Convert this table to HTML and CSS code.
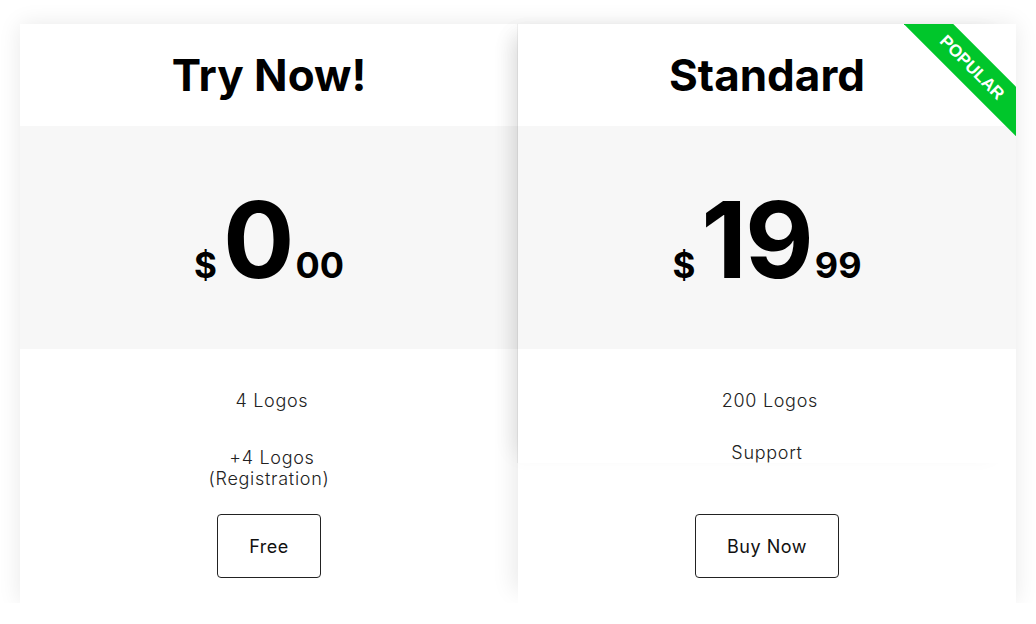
FILE: index.html
```html
<!DOCTYPE html>
<html>
<head>
<meta charset="utf-8">
<link rel="stylesheet" href="styles.css">
</head>
<body>
<div class="pricing">
  <div class="col col-left">
    <div class="card-top">
      <div class="card-head"><h2 class="title">Try Now!</h2></div>
      <div class="price"><span class="cur">$</span><span class="amount">0</span><span class="cents">00</span></div>
      <ul class="features">
        <li>&nbsp;4 Logos</li>
        <li class="extra">&nbsp;+4 Logos<br>(Registration)</li>
      </ul>
    </div>
    <div class="action"><a class="btn">Free</a></div>
  </div>
  <div class="col col-right">
    <div class="card-top card-top-right">
      <div class="card-head"><h2 class="title">Standard</h2></div>
      <div class="price"><span class="cur">$</span><span class="amount">19</span><span class="cents">99</span></div>
      <ul class="features">
        <li>&nbsp;200 Logos</li>
        <li>Support</li>
      </ul>
      <div class="ribbon"><div class="ribbon-band">POPULAR</div></div>
    </div>
    <div class="action"><a class="btn">Buy Now</a></div>
  </div>
</div>
</body>
</html>
```

FILE: styles.css
```css
* { box-sizing: border-box; }
html, body { margin: 0; padding: 0; background: #fff; }
body { padding: 24px 20px 0 20px; font-family: "Inter", "Liberation Sans", sans-serif; }

.pricing {
  display: grid;
  grid-template-columns: 498px 498px;
  background: #fff;
  box-shadow: 0 0 22px rgba(0,0,0,0.09);
}

.col {
  display: flex;
  flex-direction: column;
  position: relative;
}
.col-right {
  box-shadow: -16px 0 22px -12px rgba(0,0,0,0.09);
}

.card-top { position: relative; background: #fff; }
.card-top-right {
  box-shadow: -1px 0 0 rgba(0,0,0,0.05), -14px 0 20px -10px rgba(0,0,0,0.08);
  z-index: 1;
}

.card-head {
  height: 102px;
  display: flex;
  align-items: center;
  justify-content: center;
}
.title {
  margin: 0;
  font-family: "Inter", sans-serif;
  font-weight: 700;
  font-size: 44px;
  color: #000;
  letter-spacing: 0;
}

.price {
  height: 223px;
  background: #f7f7f7;
  display: flex;
  align-items: baseline;
  justify-content: center;
  padding-top: 61px;
  line-height: 1;
  color: #000;
  font-weight: 700;
}
.cur { font-size: 35px; margin-right: 6px; }
.amount { font-size: 106px; letter-spacing: -2px; }
.cents { font-size: 36px; margin-left: 3px; }

.features {
  list-style: none;
  margin: 0;
  padding: 41px 0 0 0;
  text-align: center;
  font-size: 18px;
  font-weight: 300;
  line-height: 21px;
  color: #222;
  letter-spacing: 0.7px;
}
.features li + li { margin-top: 31px; }
.features li.extra { margin-top: 36px; }

.action {
  margin-top: auto;
  padding: 25px 0 25px;
  display: flex;
  justify-content: center;
}
.btn {
  display: flex;
  align-items: center;
  height: 64px;
  padding: 0 31px;
  border: 1px solid #222;
  border-radius: 4px;
  font-size: 18px;
  letter-spacing: 0.5px;
  color: #111;
  background: #fff;
}

.ribbon {
  position: absolute;
  top: 0;
  right: 0;
  width: 112px;
  height: 112px;
  overflow: hidden;
}
.ribbon-band {
  position: absolute;
  left: -17px;
  top: 26px;
  width: 170px;
  height: 35px;
  background: #00c62b;
  color: #fff;
  font-family: "Liberation Sans", Arial, sans-serif;
  font-weight: 700;
  font-size: 17px;
  line-height: 35px;
  text-align: center;
  transform: rotate(45deg);
  letter-spacing: 0;
}
```
